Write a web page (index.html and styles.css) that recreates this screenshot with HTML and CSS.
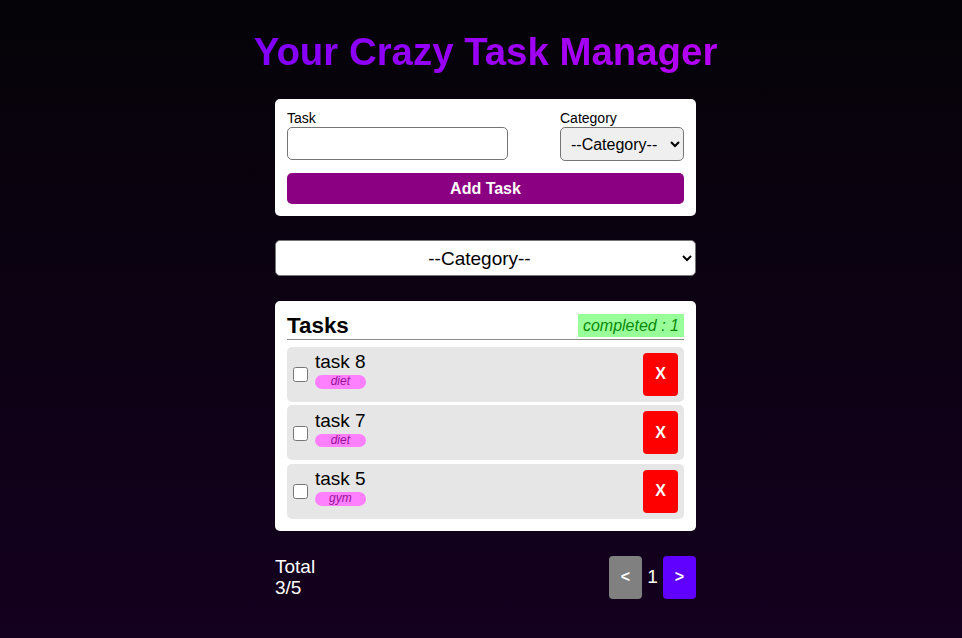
FILE: index.html
```html
<!DOCTYPE html>
<html lang="en">
<head>
<meta charset="utf-8">
<title>Your Crazy Task Manager</title>
<link rel="stylesheet" href="styles.css">
</head>
<body>
<div class="page">
  <h1 class="title">Your Crazy Task Manager</h1>
  <main class="app">
    <form class="card add-form">
      <div class="form-row">
        <div class="field field-task">
          <label class="label" for="task">Task</label>
          <input class="text-input" id="task" type="text">
        </div>
        <div class="field field-cat">
          <label class="label" for="cat">Category</label>
          <select class="cat-select" id="cat">
            <option>--Category--</option>
            <option>diet</option>
            <option>gym</option>
          </select>
        </div>
      </div>
      <button class="add-btn" type="button">Add Task</button>
    </form>

    <select class="filter-select">
      <option>--Category--</option>
      <option>diet</option>
      <option>gym</option>
    </select>

    <section class="card tasks">
      <header class="tasks-head">
        <h2 class="tasks-title">Tasks</h2>
        <span class="completed">completed : 1</span>
      </header>
      <ul class="task-list">
        <li class="task">
          <input class="check" type="checkbox">
          <div class="task-text">
            <span class="task-name">task 8</span>
            <span class="tag">diet</span>
          </div>
          <button class="del-btn" type="button">X</button>
        </li>
        <li class="task">
          <input class="check" type="checkbox">
          <div class="task-text">
            <span class="task-name">task 7</span>
            <span class="tag">diet</span>
          </div>
          <button class="del-btn" type="button">X</button>
        </li>
        <li class="task">
          <input class="check" type="checkbox">
          <div class="task-text">
            <span class="task-name">task 5</span>
            <span class="tag">gym</span>
          </div>
          <button class="del-btn" type="button">X</button>
        </li>
      </ul>
    </section>

    <footer class="footer">
      <div class="total">Total<br>3/5</div>
      <div class="pager">
        <button class="page-btn prev" type="button">&lt;</button>
        <span class="page-num">1</span>
        <button class="page-btn next" type="button">&gt;</button>
      </div>
    </footer>
  </main>
</div>
</body>
</html>
```

FILE: styles.css
```css
* { box-sizing: border-box; }

html, body {
  margin: 0;
  min-height: 100%;
}

body {
  font-family: "Liberation Sans", Arial, sans-serif;
  background: linear-gradient(180deg, #050307 0%, #14001f 100%);
  min-height: 638px;
  color: #000;
}

.page {
  padding-left: 9px;
  padding-bottom: 20px;
}

.title {
  margin: 30px 0 25px;
  font-size: 38.4px;
  line-height: 44px;
  font-weight: bold;
  text-align: center;
  background: linear-gradient(90deg, #6400ff 0%, #d200f0 100%);
  -webkit-background-clip: text;
  background-clip: text;
  color: transparent;
}

.app {
  width: 421px;
  margin: 0 auto;
}

.card {
  background: #fff;
  border-radius: 5px;
  padding: 12px;
}

.add-form {
  display: flex;
  flex-direction: column;
  gap: 12px;
}

.form-row {
  display: flex;
  justify-content: space-between;
}

.field {
  display: flex;
  flex-direction: column;
}

.label {
  font-size: 14px;
  line-height: 14px;
  margin-bottom: 2px;
}

.text-input {
  width: 221px;
  height: 33px;
  border: 1px solid #767676;
  border-radius: 5px;
  font-family: inherit;
  font-size: 16px;
  padding: 0 6px;
  background: #fff;
}

.cat-select {
  width: 124px;
  height: 34px;
  border: 1px solid #767676;
  border-radius: 5px;
  background-color: #efefef;
  font-family: inherit;
  font-size: 16px;
  color: #000;
  padding: 0 4px 0 6px;
}

.add-btn {
  height: 31px;
  border: none;
  border-radius: 5px;
  background: #8b0082;
  color: #fff;
  font-family: inherit;
  font-size: 16px;
  font-weight: bold;
}

.filter-select {
  display: block;
  width: 421px;
  height: 36px;
  margin: 24px 0 25px;
  border: 1px solid #767676;
  border-radius: 5px;
  background-color: #fff;
  font-family: inherit;
  font-size: 19px;
  color: #000;
  text-align: center;
  text-align-last: center;
  padding: 0 6px;
}

.tasks-head {
  display: flex;
  justify-content: space-between;
  align-items: center;
  border-bottom: 1px solid #8a8a8a;
  margin-bottom: 7px;
}

.tasks-title {
  margin: 0;
  font-size: 22.4px;
  line-height: 25.5px;
  font-weight: bold;
}

.completed {
  background: #99ff99;
  color: #0a8a0a;
  font-style: italic;
  font-size: 16px;
  line-height: 23px;
  padding: 0 5px;
}

.task-list {
  list-style: none;
  margin: 0;
  padding: 0;
  display: flex;
  flex-direction: column;
  gap: 3.5px;
}

.task {
  display: flex;
  align-items: center;
  height: 55px;
  padding: 0 6px;
  background: #e6e6e6;
  border-radius: 5px;
}

.check {
  width: 15px;
  height: 15px;
  margin: 1px 7px 0 0;
  flex: none;
}

.task-text {
  align-self: flex-start;
  margin-top: 4.5px;
  display: flex;
  flex-direction: column;
}

.task-name {
  font-size: 19px;
  line-height: 22px;
}

.tag {
  margin-top: 2px;
  background: #ff80ff;
  color: #9a109a;
  font-style: italic;
  font-size: 12px;
  line-height: 13.5px;
  text-align: center;
  border-radius: 7px;
}

.del-btn {
  margin-left: auto;
  width: 35px;
  height: 43px;
  border: none;
  border-radius: 4px;
  background: #ff0000;
  color: #fff;
  font-family: inherit;
  font-size: 16px;
  font-weight: bold;
  padding: 0;
}

.footer {
  margin-top: 25px;
  display: flex;
  justify-content: space-between;
  align-items: center;
  color: #fff;
}

.total {
  font-size: 19px;
  line-height: 21.5px;
}

.pager {
  display: flex;
  align-items: center;
  gap: 5px;
}

.page-btn {
  width: 33px;
  height: 43px;
  border: none;
  border-radius: 4px;
  color: #fff;
  font-family: inherit;
  font-size: 16px;
  font-weight: bold;
  padding: 0;
}

.prev { background: #808080; }
.next { background: #6000ff; }

.page-num {
  font-size: 19px;
  line-height: 22px;
  min-width: 11px;
  text-align: center;
}
```
